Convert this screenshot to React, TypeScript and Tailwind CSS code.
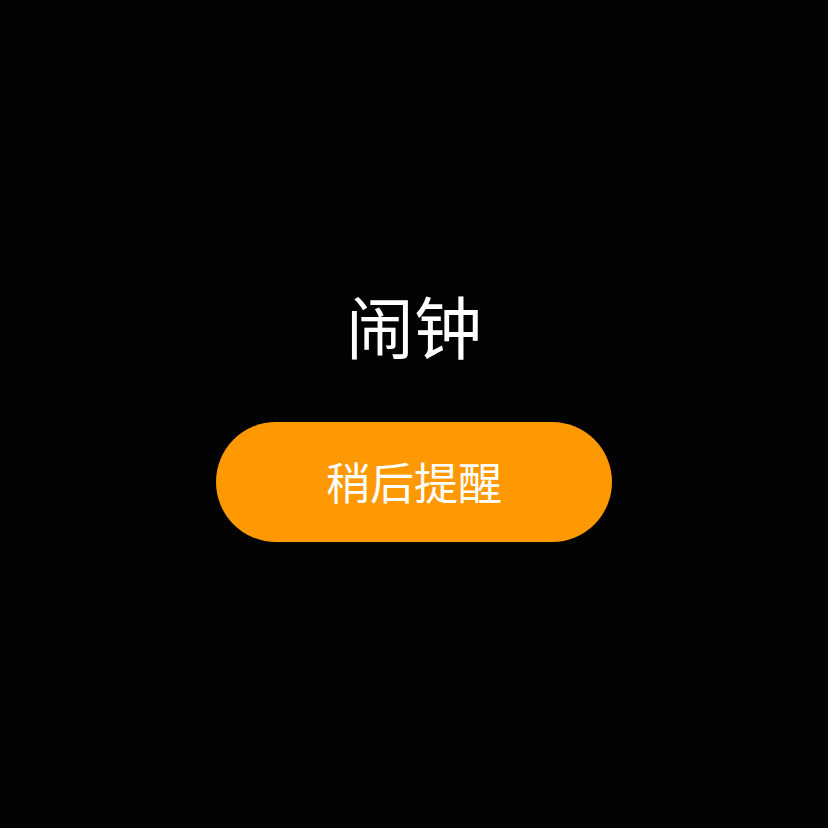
export default function App() {
  return (
    <div
      className="w-[828px] h-[828px] bg-[#030303] flex flex-col items-center justify-center pt-[5px]"
      style={{ fontFamily: '"Noto Sans CJK SC", "Noto Sans", sans-serif' }}
    >
      <h1 className="text-[68px] leading-none font-normal text-white">闹钟</h1>
      <button className="mt-[63px] w-[396px] h-[120px] rounded-full bg-[#ff9903] text-white text-[44px] leading-none font-normal flex items-center justify-center pb-[3px]">
        稍后提醒
      </button>
    </div>
  );
}
